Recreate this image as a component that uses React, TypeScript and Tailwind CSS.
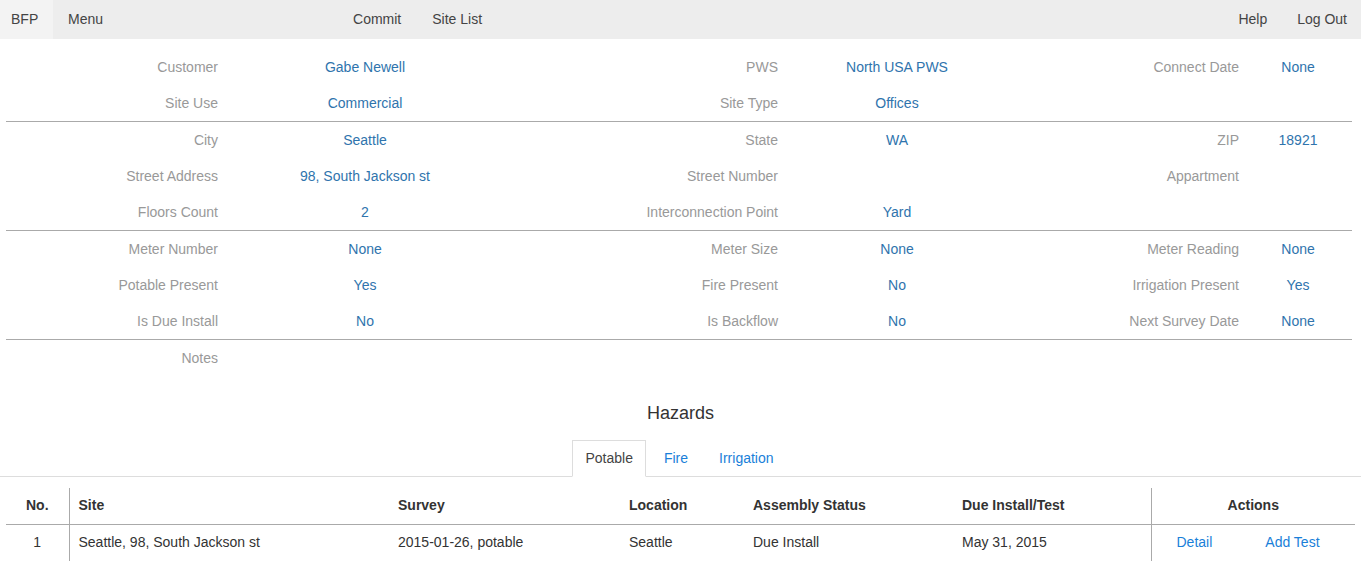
import React from "react";

const font = { fontFamily: '"Liberation Sans", Arial, sans-serif' };

type Cell = [string, string];
const groups: Cell[][][] = [
  [
    [["Customer", "Gabe Newell"], ["PWS", "North USA PWS"], ["Connect Date", "None"]],
    [["Site Use", "Commercial"], ["Site Type", "Offices"], ["", ""]],
  ],
  [
    [["City", "Seattle"], ["State", "WA"], ["ZIP", "18921"]],
    [["Street Address", "98, South Jackson st"], ["Street Number", ""], ["Appartment", ""]],
    [["Floors Count", "2"], ["Interconnection Point", "Yard"], ["", ""]],
  ],
  [
    [["Meter Number", "None"], ["Meter Size", "None"], ["Meter Reading", "None"]],
    [["Potable Present", "Yes"], ["Fire Present", "No"], ["Irrigation Present", "Yes"]],
    [["Is Due Install", "No"], ["Is Backflow", "No"], ["Next Survey Date", "None"]],
  ],
];

function Row({ cells }: { cells: Cell[] }) {
  return (
    <div className="grid grid-cols-[217px_284px_276px_228px_233px_1fr] h-[36px] items-center text-[14px]">
      {cells.map(([l, v], i) => (
        <React.Fragment key={i}>
          <div className="text-right pr-[5px] text-[#999]">{l}</div>
          <div className="text-center text-[#2f74ad]">{v}</div>
        </React.Fragment>
      ))}
    </div>
  );
}

export default function App() {
  return (
    <div style={font} className="bg-white text-[#333] w-[1361px] min-h-[579px]">
      <nav className="h-[39px] bg-[#ededed] flex items-center text-[14px] text-[#444]">
        <div className="h-full w-[53px] bg-[#f3f3f3] flex items-center pl-[11px]">BFP</div>
        <div className="ml-[15px]">Menu</div>
        <div className="ml-[250px]">Commit</div>
        <div className="ml-[31px]">Site List</div>
        <div className="ml-auto">Help</div>
        <div className="ml-[30px] mr-[14px]">Log Out</div>
      </nav>

      <div className="pt-[10px] mx-[6px]">
        {groups.map((g, gi) => (
          <div key={gi} className="border-b border-[#aaa] mr-[3px]">
            {g.map((r, ri) => (
              <Row key={ri} cells={r} />
            ))}
          </div>
        ))}
        <div className="grid grid-cols-[217px_1fr] h-[36px] items-center text-[14px]">
          <div className="text-right pr-[5px] text-[#999]">Notes</div>
          <div />
        </div>
      </div>

      <h2 className="text-center text-[18px] text-[#333] mt-[27px] leading-[20px]">Hazards</h2>

      <div className="mt-[17px] border-b border-[#ddd] flex justify-center text-[14px]">
        <div className="flex">
          <div className="h-[37px] px-[12px] flex items-center border border-[#ddd] border-b-white bg-white mb-[-1px] text-[#444]">
            Potable
          </div>
          <div className="h-[36px] pl-[18px] pr-[15px] flex items-center text-[#1a7fd9]">Fire</div>
          <div className="h-[36px] pl-[16px] pr-[15px] flex items-center text-[#1a7fd9]">Irrigation</div>
        </div>
      </div>

      <table className="mx-[6px] mt-[11px] text-[14px] border-collapse w-[1349px]">
        <thead>
          <tr className="h-[36px] border-b border-[#aaa]">
            <th className="w-[63px] text-center font-bold border-r border-[#aaa]">No.</th>
            <th className="text-left pl-[9px] w-[329px] font-bold">Site</th>
            <th className="text-left w-[231px] font-bold">Survey</th>
            <th className="text-left w-[124px] font-bold">Location</th>
            <th className="text-left w-[209px] font-bold">Assembly Status</th>
            <th className="text-left w-[189px] font-bold">Due Install/Test</th>
            <th className="text-center font-bold border-l border-[#aaa]">Actions</th>
          </tr>
        </thead>
        <tbody>
          <tr className="h-[37px]">
            <td className="text-center border-r border-[#aaa]">1</td>
            <td className="pl-[9px]">Seattle, 98, South Jackson st</td>
            <td>2015-01-26, potable</td>
            <td>Seattle</td>
            <td>Due Install</td>
            <td>May 31, 2015</td>
            <td className="border-l border-[#aaa]">
              <div className="flex text-[#1a7fd9]">
                <span className="ml-[25px]">Detail</span>
                <span className="ml-[53px]">Add Test</span>
              </div>
            </td>
          </tr>
        </tbody>
      </table>
    </div>
  );
}
